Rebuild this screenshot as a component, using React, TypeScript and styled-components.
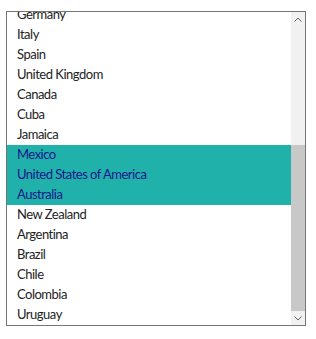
import { useEffect, useRef } from 'react';
import styled, { createGlobalStyle } from 'styled-components';

const GlobalStyle = createGlobalStyle`
  body {
    margin: 0;
    background: #ffffff;
    font-family: Lato, 'Open Sans', sans-serif;
  }
`;

const Page = styled.div`
  padding: 11px 0 0 6px;
`;

const ListBox = styled.div`
  display: flex;
  width: 300px;
  height: 315px;
  box-sizing: border-box;
  border: 1px solid #767676;
  background: #ffffff;
`;

const Options = styled.ul`
  flex: 1;
  margin: 0;
  padding: 0;
  list-style: none;
  overflow-y: scroll;
  scrollbar-width: none;
  &::-webkit-scrollbar {
    display: none;
  }
`;

const Option = styled.li<{ $selected?: boolean }>`
  height: 20px;
  line-height: 19px;
  padding-left: 10px;
  font-size: 13px;
  letter-spacing: -0.5px;
  white-space: nowrap;
  color: ${({ $selected }) => ($selected ? '#15158c' : '#222222')};
  background: ${({ $selected }) => ($selected ? '#20b2aa' : 'transparent')};
`;

const Scrollbar = styled.div`
  display: flex;
  flex-direction: column;
  width: 14px;
  background: #f1f1f1;
`;

const Arrow = styled.div`
  display: flex;
  align-items: center;
  justify-content: center;
  height: 14px;
  flex: none;
`;

const Track = styled.div`
  flex: 1;
  display: flex;
  flex-direction: column;
`;

const Thumb = styled.div`
  background: #c8c8c8;
`;

const countries = [
  'France',
  'India',
  'China',
  'Japan',
  'Germany',
  'Italy',
  'Spain',
  'United Kingdom',
  'Canada',
  'Cuba',
  'Jamaica',
  'Mexico',
  'United States of America',
  'Australia',
  'New Zealand',
  'Argentina',
  'Brazil',
  'Chile',
  'Colombia',
  'Uruguay',
];

const selected = ['Mexico', 'United States of America', 'Australia'];

export default function App() {
  const listRef = useRef<HTMLUListElement>(null);

  useEffect(() => {
    if (listRef.current) listRef.current.scrollTop = 87;
  }, []);

  return (
    <Page>
      <GlobalStyle />
      <ListBox>
        <Options ref={listRef}>
          {countries.map(c => (
            <Option key={c} $selected={selected.includes(c)}>
              {c}
            </Option>
          ))}
        </Options>
        <Scrollbar>
          <Arrow>
            <svg width="8" height="5" viewBox="0 0 8 5">
              <path d="M0.5 4.5 L4 1 L7.5 4.5" fill="none" stroke="#606060" strokeWidth="1" />
            </svg>
          </Arrow>
          <Track>
            <div style={{ height: 119, flex: 'none' }} />
            <Thumb style={{ flex: 1 }} />
          </Track>
          <Arrow>
            <svg width="8" height="5" viewBox="0 0 8 5">
              <path d="M0.5 0.5 L4 4 L7.5 0.5" fill="none" stroke="#606060" strokeWidth="1" />
            </svg>
          </Arrow>
        </Scrollbar>
      </ListBox>
    </Page>
  );
}
